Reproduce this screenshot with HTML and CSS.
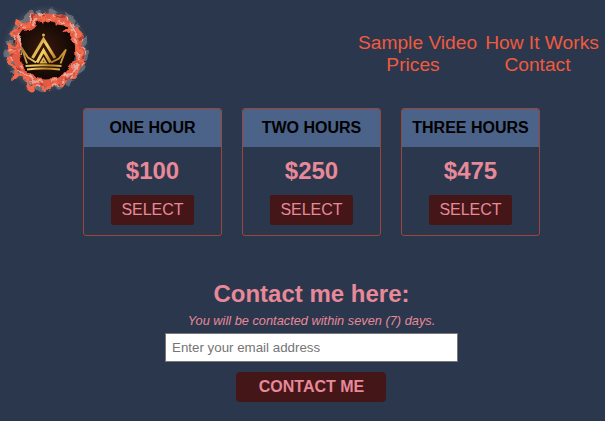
FILE: index.html
```html
<!DOCTYPE html>
<html lang="en">
<head>
<meta charset="utf-8">
<title>Prices</title>
<link rel="stylesheet" href="styles.css">
</head>
<body>
<header class="top">
  <svg class="logo" viewBox="0 0 100 100" aria-hidden="true">
    <defs>
      <linearGradient id="gold" gradientUnits="userSpaceOnUse" x1="22" y1="40" x2="66" y2="70">
        <stop offset="0" stop-color="#9b6519"/><stop offset=".45" stop-color="#f5d064"/><stop offset=".7" stop-color="#b98324"/><stop offset="1" stop-color="#e9c458"/>
      </linearGradient>
      <radialGradient id="disc"><stop offset="0" stop-color="#3a1a0c"/><stop offset="1" stop-color="#100605"/></radialGradient>
      <filter id="rough" x="-20%" y="-20%" width="140%" height="140%">
        <feTurbulence type="fractalNoise" baseFrequency=".08" numOctaves="2" seed="8"/>
        <feDisplacementMap in="SourceGraphic" scale="13" xChannelSelector="R" yChannelSelector="G"/>
        <feGaussianBlur stdDeviation=".7"/>
      </filter>
      <filter id="haze" x="-20%" y="-20%" width="140%" height="140%"><feGaussianBlur stdDeviation="2.5"/></filter>
    </defs>
    <circle class="halo" cx="46" cy="49" r="40" filter="url(#haze)"/>
    <circle cx="44" cy="49" r="32" fill="url(#disc)"/>
    <g filter="url(#rough)">
      <circle class="wisp" cx="47.500" cy="50" r="38" stroke-dasharray="9 5 14 4 6 7"/>
      <circle class="flame" cx="47.500" cy="50" r="32.500"/>
      <path class="tongues" d="M19 30L17 21l9 6 4-9 5 5 9-9 1 8 12-6 0 8 13 2-3 7 12-3-5 11 8 9-6 4 7 8-8 4 2 11-8-1-5 10-9-3-8 7-7-6-13 2-2-8-11-2 3-7-9-5 6-7-6-11 8-3-4-12z"/>
      <circle class="ember" cx="47.500" cy="50" r="35" stroke-dasharray="5 9 3 12"/>
      <circle class="pale" cx="47.500" cy="50" r="36" stroke-dasharray="3 8 6 11 2 7"/>
      <circle class="pale" cx="47.500" cy="50" r="31" stroke-dasharray="6 10 3 7"/>
      <path class="pale" d="M22 72l9 7 8 2M65 76l9-5 3-9M68 23l5 5 2 8M22 35l-4 10 3 9"/>
    </g>
    <circle class="dot" cx="43.5" cy="35" r="1.5"/>
    <g class="crown">
      <path class="bold" d="M32.5 58l11-18.5L55 58"/>
      <path class="bold" d="M37 62.5l6.5-12 7 12"/>
      <path d="M41 62.5l2.5-4 2.5 4z"/>
      <path d="M27 63.5L21.5 47.5l6.5 10 8 5M60.5 63.5L66 49.5l-7 9-8 4"/>
      <path d="M25.5 66q18-1.5 36 0M27 69.5q16-2 33 0"/>
    </g>
  </svg>
  <nav class="nav">
    <a>Sample Video</a><a>How It Works</a>
    <a>Prices</a><a>Contact</a>
  </nav>
</header>
<main>
  <section class="plans">
    <article class="plan"><h2>ONE HOUR</h2><p class="price">$100</p><button class="select">SELECT</button></article>
    <article class="plan"><h2>TWO HOURS</h2><p class="price">$250</p><button class="select">SELECT</button></article>
    <article class="plan"><h2>THREE HOURS</h2><p class="price">$475</p><button class="select">SELECT</button></article>
  </section>
  <form class="contact">
    <h1>Contact me here:</h1>
    <p class="note">You will be contacted within seven (7) days.</p>
    <input class="email" type="email" placeholder="Enter your email address">
    <button class="send" type="button">CONTACT ME</button>
  </form>
</main>
</body>
</html>
```
FILE: styles.css
```css
* { box-sizing: border-box; }
body {
  margin: 0;
  background: #2b374c;
  color: #e78999;
  font-family: "Liberation Sans", Arial, sans-serif;
}
h1, h2, p { margin: 0; }
button, input { font-family: inherit; margin: 0; }
.top { display: flex; justify-content: space-between; height: 108px; }
.logo { display: block; width: 100px; height: 100px; }
.halo { fill: #4a5361; opacity: .8; }
.wisp { fill: none; stroke: #9a979c; stroke-width: 7; opacity: .5; }
.flame { fill: none; stroke: #e45a42; stroke-width: 8; }
.tongues { fill: none; stroke: #f2684b; stroke-width: 3; }
.pale { fill: none; stroke: #e5bab2; stroke-width: 2; opacity: .8; }
.ember { fill: none; stroke: #a83c30; stroke-width: 2; }
.dot { fill: #e0b44a; }
.crown { fill: none; stroke: url(#gold); stroke-width: 1.8; }
.bold { stroke-width: 3; }
.nav {
  display: grid;
  grid-template-columns: 119px 114px;
  grid-auto-rows: 22px;
  column-gap: 8px;
  padding: 32px 6px 0 0;
  color: #f05a3f;
  font-size: 19.2px;
  line-height: 22px;
  text-align: center;
  white-space: nowrap;
}
.nav a:nth-child(3), .nav a:nth-child(4) { padding-right: 9px; }
.plans { display: flex; gap: 20px; padding-left: 83px; }
.plan {
  display: flex;
  flex-direction: column;
  align-items: center;
  width: 139px;
  height: 128px;
  border: 1px solid #9c463b;
  border-radius: 3px;
}
.plan h2 {
  width: 100%;
  height: 38px;
  border-radius: 2px 2px 0 0;
  background: #4b6289;
  color: #000;
  font-size: 16px;
  line-height: 38px;
  text-align: center;
  white-space: nowrap;
}
.price { margin-top: 10px; font-size: 24px; font-weight: bold; line-height: 28px; }
.select {
  width: 83px;
  height: 30px;
  margin-top: 10px;
  padding: 0;
  border: 0;
  border-radius: 2px;
  background: #451617;
  color: #e78999;
  font-size: 16px;
}
.contact {
  display: flex;
  flex-direction: column;
  align-items: center;
  width: 623px;
  padding-top: 44px;
}
.contact h1 { font-size: 24px; line-height: 28px; }
.note { margin-top: 5px; font-size: 12.8px; font-style: italic; line-height: 15px; }
.email {
  width: 293px;
  height: 29px;
  margin-top: 5px;
  padding: 0 6px;
  border: 1px solid #777;
  border-radius: 0;
  background: #fff;
  font-size: 13.333px;
}
.email::placeholder { color: #757575; }
.send {
  width: 150px;
  height: 30px;
  margin: 10px 1px 0 0;
  padding: 0 0 0 1px;
  border: 0;
  border-radius: 4px;
  background: #451617;
  color: #e78999;
  font-size: 16px;
  font-weight: bold;
}
```
